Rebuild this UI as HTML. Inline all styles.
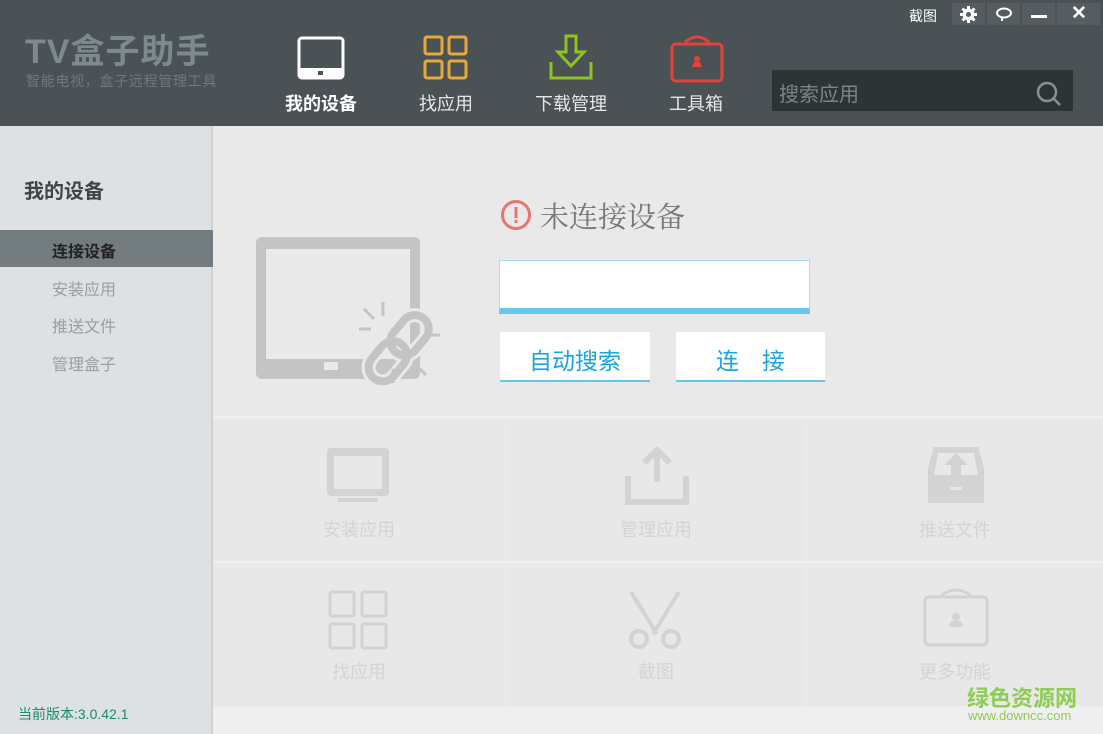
<!DOCTYPE html>
<html><head><meta charset="utf-8"><style>
*{margin:0;padding:0;box-sizing:border-box}
body{width:1103px;height:734px;overflow:hidden;background:#e9e9e9;font-family:"Liberation Sans","Noto Sans CJK SC",sans-serif;position:relative}
.abs{position:absolute}
#hdr{left:0;top:0;width:1103px;height:126px;background:#4a5255}
.nav{position:absolute;font-size:18px;color:#e6e6e6;text-align:center;width:100px}
#side{left:0;top:126px;width:213px;height:608px;background:#dde1e4;border-right:2px solid #cfd3d5}
.si{position:absolute;left:52px;font-size:16px;color:#9a9ea0}
.cell{position:absolute;background:#e8e8e8;text-align:center;color:#d4d4d4;font-size:18px}
.cell span{position:absolute;left:0;right:0}
.btn{position:absolute;background:#fff;border-bottom:2px solid #62c5ea;color:#17a6e4;font-size:23px;text-align:center;line-height:58px}
</style></head><body>
<div id="hdr" class="abs">
 <div class="abs" style="left:25px;top:24px;font-size:34px;font-weight:bold;color:#7d8a8d;letter-spacing:1px">TV盒子助手</div>
 <div class="abs" style="left:26px;top:71px;font-size:14px;color:#6e7a7d;letter-spacing:0.7px">智能电视，盒子远程管理工具</div>
 <svg class="abs" style="left:297px;top:36px" width="50" height="44"><rect x="2" y="2" width="44" height="40" rx="3" fill="none" stroke="#fff" stroke-width="3"/><rect x="2" y="32" width="44" height="10" fill="#fff"/><rect x="21" y="35" width="5" height="4" fill="#4a5255"/></svg>
 <div class="nav" style="left:271px;top:90px;font-weight:bold;color:#fff">我的设备</div>
 <svg class="abs" style="left:423px;top:35px" width="48" height="46" fill="none" stroke="#e8a83a" stroke-width="3"><rect x="2" y="2" width="17" height="17" rx="2"/><rect x="26" y="2" width="17" height="17" rx="2"/><rect x="2" y="26" width="17" height="17" rx="2"/><rect x="26" y="26" width="17" height="17" rx="2"/></svg>
 <div class="nav" style="left:396px;top:90px">找应用</div>
 <svg class="abs" style="left:548px;top:34px" width="48" height="48" fill="none" stroke="#8ec21f" stroke-width="3"><path d="M18 2h10v16h8L23 32 10 18h8z"/><path d="M3 28v16h40V28"/></svg>
 <div class="nav" style="left:521px;top:90px">下载管理</div>
 <svg class="abs" style="left:669px;top:32px" width="56" height="52" fill="none" stroke="#e0443e" stroke-width="3"><path d="M16 10q12-10 24 0"/><rect x="3" y="12" width="50" height="37" rx="4"/><circle cx="28" cy="27" r="3" fill="#e0443e" stroke="none"/><path d="M23 35h10l-2-5h-6z" fill="#e0443e" stroke="none"/></svg>
 <div class="nav" style="left:646px;top:90px">工具箱</div>
 <div class="abs" style="left:909px;top:6px;font-size:14px;color:#fff">截图</div>
 <div class="abs" style="left:952px;top:3px;width:33px;height:22px;background:#555d60"></div>
 <div class="abs" style="left:987px;top:3px;width:33px;height:22px;background:#555d60"></div>
 <div class="abs" style="left:1022px;top:3px;width:33px;height:22px;background:#555d60"></div>
 <div class="abs" style="left:1057px;top:3px;width:43px;height:22px;background:#555d60"></div>
 <svg class="abs" style="left:960px;top:6px" width="17" height="17"><g fill="#fff"><circle cx="8.5" cy="8.5" r="6"/><g stroke="#fff" stroke-width="3"><path d="M8.5 0v17M0 8.5h17M2.5 2.5l12 12M14.5 2.5l-12 12"/></g></g><circle cx="8.5" cy="8.5" r="2.5" fill="#555d60"/></svg>
 <svg class="abs" style="left:995px;top:7px" width="18" height="15" fill="none" stroke="#fff" stroke-width="2"><ellipse cx="9" cy="6" rx="7" ry="4.5"/><path d="M7 10v4"/></svg>
 <div class="abs" style="left:1031px;top:15px;width:16px;height:3px;background:#fff"></div>
 <div class="abs" style="left:1071px;top:2px;font-size:19px;color:#fff;font-weight:bold">✕</div>
 <div class="abs" style="left:772px;top:70px;width:301px;height:41px;background:#2e3436"></div>
 <div class="abs" style="left:779px;top:78px;font-size:20px;color:#7e8486">搜索应用</div>
 <svg class="abs" style="left:1035px;top:80px" width="28" height="28" fill="none" stroke="#8b9193" stroke-width="2.5"><circle cx="12" cy="12" r="9"/><path d="M19 19l6 6"/></svg>
</div>
<div id="side" class="abs">
 <div class="abs" style="left:24px;top:49px;font-size:20px;font-weight:bold;color:#444">我的设备</div>
 <div class="abs" style="left:0;top:104px;width:213px;height:37px;background:#737d80"></div>
 <div class="si" style="top:112px;color:#222;font-weight:bold">连接设备</div>
 <div class="si" style="top:150px">安装应用</div>
 <div class="si" style="top:187px">推送文件</div>
 <div class="si" style="top:225px">管理盒子</div>
 <div class="abs" style="left:18px;top:578px;font-size:14px;color:#1b8b6e">当前版本:3.0.42.1</div>
</div>
<svg class="abs" style="left:256px;top:237px" width="190" height="155"><rect x="0" y="0" width="164" height="142" rx="6" fill="#c4c4c4"/><rect x="10" y="12" width="144" height="110" fill="#e9e9e9"/><rect x="68" y="125" width="14" height="8" fill="#e9e9e9"/>
<g transform="rotate(-50 142 112)">
<rect x="104" y="98" width="44" height="28" rx="14" fill="none" stroke="#e9e9e9" stroke-width="14"/>
<rect x="138" y="98" width="44" height="28" rx="14" fill="none" stroke="#e9e9e9" stroke-width="14"/>
<rect x="104" y="98" width="44" height="28" rx="14" fill="none" stroke="#c4c4c4" stroke-width="8"/>
<rect x="138" y="98" width="44" height="28" rx="14" fill="none" stroke="#c4c4c4" stroke-width="8"/>
</g>
<g stroke="#c4c4c4" stroke-width="3"><path d="M108 72l10 10M127 65v14M103 92h12M172 98h12M160 128l10 10M137 132v14"/></g></svg>
<svg class="abs" style="left:500px;top:199px" width="32" height="32"><circle cx="16" cy="16" r="13.5" fill="none" stroke="#ea7470" stroke-width="3"/><rect x="14.5" y="8" width="3" height="11" fill="#ea7470"/><rect x="14.5" y="21" width="3" height="3" fill="#ea7470"/></svg>
<div class="abs" style="left:540px;top:195px;font-size:29px;color:#777;font-family:'Noto Serif CJK SC',serif">未连接设备</div>
<div class="abs" style="left:499px;top:260px;width:311px;height:54px;background:#fff;border:1px solid #a8dcf0;border-bottom:6px solid #66c8ec"></div>
<div class="btn" style="left:500px;top:332px;width:150px;height:50px">自动搜索</div>
<div class="btn" style="left:676px;top:332px;width:149px;height:50px">连　接</div>
<div class="abs" style="left:213px;top:416px;width:890px;height:2px;background:#f0f0f0"></div>
<div class="cell" style="left:213px;top:420px;width:292px;height:141px"><svg class="abs" style="left:114px;top:28px" width="62" height="56"><rect x="0" y="0" width="62" height="48" rx="4" fill="#d3d3d3"/><rect x="7" y="8" width="48" height="33" fill="#e8e8e8"/><rect x="11" y="50" width="40" height="4" fill="#d3d3d3"/></svg><span style="top:96px">安装应用</span></div>
<div class="cell" style="left:507px;top:420px;width:298px;height:141px"><svg class="abs" style="left:117px;top:26px" width="66" height="60" fill="none" stroke="#d3d3d3" stroke-width="6"><path d="M33 6v30M20 17l13-13 13 13"/><path d="M4 30v26h58V30"/></svg><span style="top:96px">管理应用</span></div>
<div class="cell" style="left:807px;top:420px;width:296px;height:141px"><svg class="abs" style="left:119px;top:25px" width="60" height="60"><path d="M8 2h44l6 20v36H2V22z" fill="#d3d3d3"/><path d="M12 8h36l4 22H8z" fill="#e8e8e8"/><path d="M30 8l12 12h-7v14h-10V20h-7z" fill="#d3d3d3"/><rect x="24" y="42" width="12" height="3" fill="#e8e8e8"/></svg><span style="top:96px">推送文件</span></div>
<div class="abs" style="left:213px;top:561px;width:890px;height:2px;background:#f0f0f0"></div>
<div class="cell" style="left:213px;top:563px;width:292px;height:143px"><svg class="abs" style="left:115px;top:27px" width="60" height="60" fill="none" stroke="#d3d3d3" stroke-width="3"><rect x="2" y="2" width="24" height="24" rx="2"/><rect x="34" y="2" width="24" height="24" rx="2"/><rect x="2" y="34" width="24" height="24" rx="2"/><rect x="34" y="34" width="24" height="24" rx="2"/></svg><span style="top:95px">找应用</span></div>
<div class="cell" style="left:507px;top:563px;width:298px;height:143px"><svg class="abs" style="left:118px;top:27px" width="60" height="60" fill="none" stroke="#d3d3d3" stroke-width="4"><path d="M6 2l26 42M54 2L28 44"/><circle cx="14" cy="49" r="8"/><circle cx="46" cy="49" r="8"/></svg><span style="top:95px">截图</span></div>
<div class="cell" style="left:807px;top:563px;width:296px;height:143px"><svg class="abs" style="left:115px;top:22px" width="68" height="64" fill="none" stroke="#d3d3d3" stroke-width="3"><path d="M20 10q14-10 28 0"/><rect x="3" y="12" width="62" height="48" rx="4"/><circle cx="34" cy="32" r="4" fill="#d3d3d3" stroke="none"/><path d="M27 42h14l-2-6h-10z" fill="#d3d3d3" stroke="none"/></svg><span style="top:95px">更多功能</span></div>
<div class="abs" style="left:505px;top:420px;width:2px;height:286px;background:#ececec"></div>
<div class="abs" style="left:805px;top:420px;width:2px;height:286px;background:#ececec"></div>
<div class="abs" style="left:213px;top:706px;width:890px;height:28px;background:#efefef"></div>
<div class="abs" style="left:967px;top:681px;font-size:22px;color:#8dcd52;font-weight:bold">绿色资源网</div>
<div class="abs" style="left:968px;top:708px;font-size:13px;color:#8dcd52">www.downcc.com</div>
</body></html>
